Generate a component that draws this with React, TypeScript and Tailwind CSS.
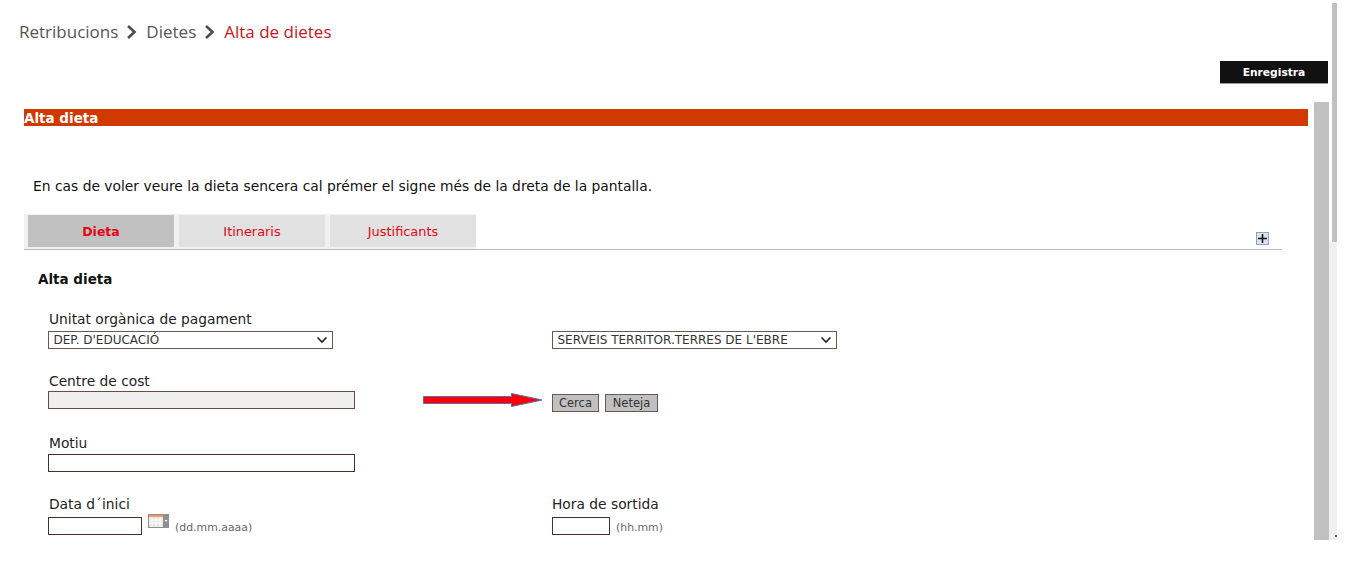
const field = "border border-[#4a2f28] bg-white";
const grayButton = "h-[18px] translate-y-[3px] border border-[#6b5750] bg-[#c0c0c0] text-[11.5px] text-[#333]";
const hint = "ml-[6px] translate-y-[1px] text-[10.9px] leading-[16px] text-[#666]";

const Chevron = () => (
  <svg width="12" height="16" viewBox="0 0 12 16" className="mx-[8px]">
    <path d="M2 2l6.5 6L2 14" fill="none" stroke="#4d4d4d" strokeWidth="2.6" />
  </svg>
);

const SelectBox = ({ text }: { text: string }) => (
  <div className="flex h-[18px] w-[285px] items-center justify-between border border-[#6b5750] bg-white pl-[4.5px] pr-[4px] text-[12px] text-[#333]">
    <span>{text}</span>
    <svg width="12" height="8" viewBox="0 0 12 8">
      <path d="M1.5 1.5L6 6l4.5-4.5" fill="none" stroke="#222" strokeWidth="1.6" />
    </svg>
  </div>
);

const Tab = ({ label, active }: { label: string; active?: boolean }) => (
  <div
    className={`flex h-[32px] w-[146px] items-center justify-center text-[#e30613] ${
      active ? "bg-[#c1c1c1] pt-[2px] text-[12.5px] font-bold" : "bg-[#e1e1e1] pt-[1px] text-[12.9px]"
    }`}
  >
    {label}
  </div>
);

const CalendarIcon = () => (
  <svg width="21" height="14" viewBox="0 0 21 14" className="mb-[7px] ml-[6px]">
    <rect width="21" height="14" fill="#8f8f8f" />
    <rect x="1" y="1" width="14" height="2" fill="#f59a5f" />
    <rect x="1" y="3" width="14" height="10" fill="#e4e4e4" />
    <path d="M1 6h14M1 9h14M4 3v10M8 3v10M12 3v10" stroke="#fff" strokeWidth="1" />
    <path d="M16.5 6h3l-1.5 2z" fill="#fff" />
  </svg>
);

const App = () => {
  return (
    <div className="flex h-[581px] w-[1358px] overflow-hidden bg-white font-['DejaVu_Sans',sans-serif]">
      <div className="flex w-[1329px] flex-col">
        <div className="flex h-[61px] items-center pl-[19px] pt-[3px] font-['Open_Sans',sans-serif] text-[17px] text-[#555]">
          Retribucions
          <Chevron />
          Dietes
          <Chevron />
          <span className="text-[#c8161d]">Alta de dietes</span>
        </div>

        <div className="flex h-[41px] justify-end pr-[1px]">
          <button className="h-[23px] w-[108px] border-b border-[#999] bg-[#111] pt-[2px] text-[10.7px] font-bold text-white">
            Enregistra
          </button>
        </div>

        <div className="flex h-[438px]">
          <div className="flex-1 pl-[24px] pr-[6px] pt-[7px]">
            <h1 className="h-[17px] bg-[#d03a00] text-[13.5px] font-bold leading-[19px] text-white">Alta dieta</h1>
            <p className="mt-[52px] pl-[9px] text-[13.85px] leading-[16px] text-[#111]">
              En cas de voler veure la dieta sencera cal prémer el signe més de la dreta de la pantalla.
            </p>

            <div className="mt-[20px] flex w-[1258px] items-end justify-between border-b border-[#bbb]">
              <div className="flex gap-[5px] bg-[#f1f1f1] pb-[2px] pl-[4px] pt-[1px]">
                <Tab label="Dieta" active />
                <Tab label="Itineraris" />
                <Tab label="Justificants" />
              </div>
              <div className="mb-[4px] mr-[13px] flex h-[13px] w-[13px] items-center justify-center border border-[#8aa2bd] bg-[#dde3ea]">
                <svg width="9" height="9" viewBox="0 0 9 9">
                  <path d="M4.5 0v9M0 4.5h9" stroke="#111" strokeWidth="1.6" />
                </svg>
              </div>
            </div>

            <h2 className="mt-[21px] pl-[14px] text-[13.5px] font-bold leading-[17px] text-[#111]">Alta dieta</h2>

            <div className="mt-[23px] grid grid-cols-[504px_1fr] pl-[24px] text-[13.8px] leading-[16px] text-[#222]">
              <div>
                <div className="mb-[4px] pl-[1px]">Unitat orgànica de pagament</div>
                <SelectBox text="DEP. D'EDUCACIÓ" />
              </div>
              <div className="pt-[20px]">
                <SelectBox text="SERVEIS TERRITOR.TERRES DE L'EBRE" />
              </div>

              <div className="mt-[24px]">
                <div className="mb-[2px] pl-[1px]">Centre de cost</div>
                <div className="h-[18px] w-[307px] border border-[#6b4a40] bg-[#efefef]" />
              </div>
              <div className="relative mt-[24px] flex items-end gap-[6px]">
                <svg width="120" height="14" viewBox="0 0 120 14" className="absolute bottom-[2px] left-[-129px]">
                  <path d="M.5 3.5h88V.5L119 7 88.5 13.5v-3H.5z" fill="#ff0000" stroke="#4f6fb0" strokeWidth="1" />
                </svg>
                <button className={`w-[47px] ${grayButton}`}>Cerca</button>
                <button className={`w-[53px] ${grayButton}`}>Neteja</button>
              </div>

              <div className="mt-[26px]">
                <div className="mb-[3px] pl-[1px]">Motiu</div>
                <div className={`h-[18px] w-[307px] ${field}`} />
              </div>
              <div />

              <div className="mt-[24px]">
                <div className="mb-[2px] pl-[1px]">Data d´inici</div>
                <div className="flex items-end">
                  <div className={`h-[18px] w-[94px] ${field}`} />
                  <CalendarIcon />
                  <span className={hint}>(dd.mm.aaaa)</span>
                </div>
              </div>
              <div className="mt-[24px]">
                <div className="mb-[5px]">Hora de sortida</div>
                <div className="flex items-end">
                  <div className={`h-[18px] w-[58px] ${field}`} />
                  <span className={hint}>(hh.mm)</span>
                </div>
              </div>
            </div>
          </div>
          <div className="w-[15px] bg-[#c1c1c1]" />
        </div>
      </div>

      <div className="flex h-[540px] w-[8px] flex-col pt-[3px]">
        <div className="ml-[3px] h-[239px] w-[5px] shrink-0 bg-[#c1c1c1]" />
        <div className="flex flex-1 items-end justify-end bg-[#f0f0f0] pb-[3px]">
          <div className="h-[2px] w-[2px] bg-[#555]" />
        </div>
      </div>
    </div>
  );
};

export default App;
